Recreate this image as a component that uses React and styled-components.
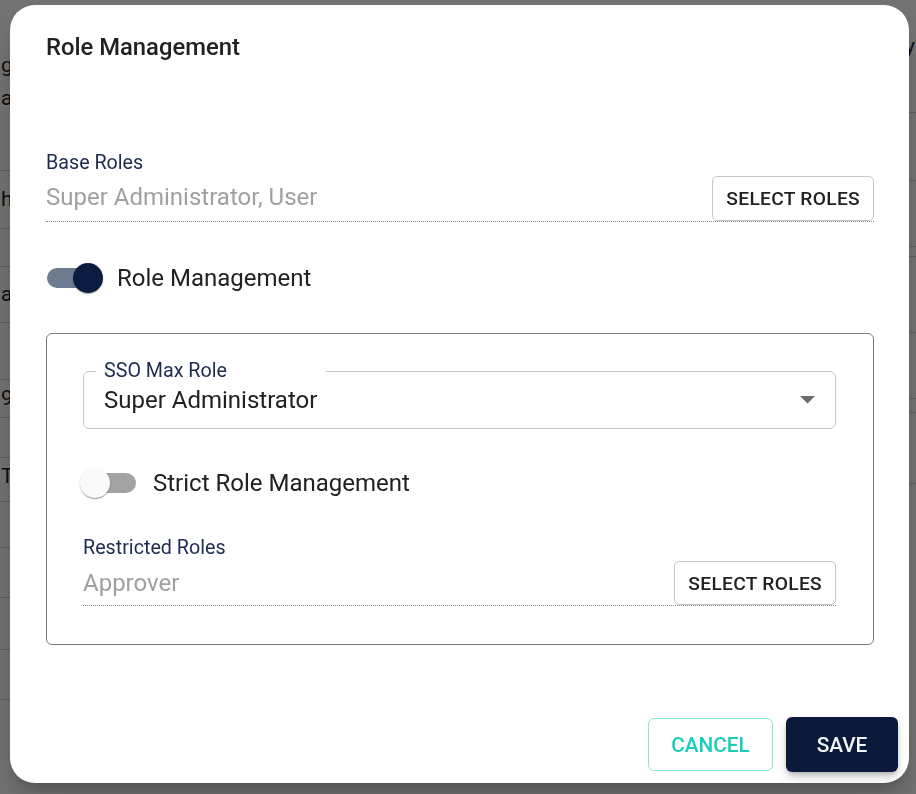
import React from 'react'
import styled, { createGlobalStyle } from 'styled-components'

const GlobalStyle = createGlobalStyle`
  * {
    box-sizing: border-box;
  }
  html, body {
    margin: 0;
    padding: 0;
    height: 100%;
    overflow: hidden;
    background: #ffffff;
    font-family: Roboto, "Noto Sans", "Liberation Sans", Arial, sans-serif;
  }
  #root {
    height: 100%;
  }
`

const NAVY = '#0b1c40'
const LABEL = '#1c2c4f'

// page behind the dialog (only the edges show)
const Page = styled.div`
  height: 100vh;
  display: flex;
  justify-content: space-between;
`

const SideColumn = styled.div`
  width: ${p => p.$w}px;
  display: flex;
  flex-direction: column;
`

const BgRow = styled.div`
  height: ${p => p.$h}px;
  flex-shrink: 0;
  border-bottom: 1px solid #cccccc;
  display: flex;
  flex-direction: column;
  justify-content: center;
  padding-bottom: ${p => p.$pb || 0}px;
  padding-left: ${p => p.$pl || 0}px;
  font-size: 21px;
  line-height: 33px;
  color: #1e1e1e;
  white-space: nowrap;
`

const Overlay = styled.div`
  position: fixed;
  inset: 0;
  background: rgba(0, 0, 0, 0.55);
  display: flex;
  padding: 5px 7px 11px 10px;
`

const Dialog = styled.div`
  flex: 1;
  background: #ffffff;
  border-radius: 25px;
  display: flex;
  flex-direction: column;
  box-shadow: 0 11px 15px -7px rgba(0, 0, 0, 0.2), 0 24px 38px 3px rgba(0, 0, 0, 0.14);
`

const Body = styled.div`
  display: flex;
  flex-direction: column;
  padding: 26px 35px 0 36px;
`

const Title = styled.h2`
  margin: 0;
  font-size: 23.8px;
  font-weight: 500;
  line-height: 32px;
  color: #212121;
`

const Field = styled.div`
  display: flex;
  flex-direction: column;
  margin-top: ${p => p.$mt}px;
`

const FieldLabel = styled.div`
  font-size: 19.7px;
  line-height: 23px;
  color: ${LABEL};
`

const FieldRow = styled.div`
  margin-top: 2px;
  display: flex;
  align-items: center;
  justify-content: space-between;
  border-bottom: 1px dotted #8c8c8c;
`

const FieldValue = styled.div`
  font-size: 24px;
  line-height: 30px;
  color: #a0a0a0;
  padding-bottom: ${p => p.$pb}px;
`

const SelectButton = styled.button`
  height: ${p => p.$h}px;
  padding: 0 13px;
  border: 1px solid #c6c6c6;
  border-radius: 5px;
  background: #ffffff;
  font-family: inherit;
  font-size: 19.2px;
  font-weight: 500;
  letter-spacing: 0.3px;
  color: #212121;
`

const ToggleRow = styled.div`
  margin-top: ${p => p.$mt}px;
  display: flex;
  align-items: center;
  gap: ${p => p.$gap}px;
  margin-left: ${p => p.$ml}px;
`

const SwitchBox = styled.div`
  position: relative;
  width: 56px;
  height: 30px;
  flex-shrink: 0;
`

const Track = styled.div`
  position: absolute;
  top: 5px;
  left: ${p => (p.$on ? 0 : 6)}px;
  width: 50px;
  height: 20px;
  border-radius: 10px;
  background: ${p => (p.$on ? '#6e7b91' : '#a3a3a3')};
`

const Thumb = styled.div`
  position: absolute;
  top: 0;
  left: ${p => (p.$on ? 26 : 0)}px;
  width: 30px;
  height: 30px;
  border-radius: 50%;
  background: ${p => (p.$on ? NAVY : '#fafafa')};
  box-shadow: 0 2px 1px -1px rgba(0, 0, 0, 0.2), 0 1px 1px 0 rgba(0, 0, 0, 0.14), 0 1px 3px 0 rgba(0, 0, 0, 0.12);
`

const ToggleLabel = styled.span`
  font-size: 24px;
  line-height: 30px;
  color: #212121;
`

const GroupBox = styled.div`
  margin-top: 40px;
  border: 1px solid #7a7a7a;
  border-radius: 6px;
  padding: 37px 37px 38px 36px;
  display: flex;
  flex-direction: column;
`

const SelectBox = styled.div`
  position: relative;
  height: 58px;
  border: 1px solid #c6c6c6;
  border-radius: 6px;
  display: flex;
  align-items: center;
  justify-content: space-between;
  padding: 0 20px;
`

const NotchLabel = styled.span`
  position: absolute;
  top: -12px;
  left: 12px;
  width: 230px;
  padding: 0 8px;
  background: #ffffff;
  font-size: 19.7px;
  line-height: 22px;
  color: ${LABEL};
`

const SelectValue = styled.span`
  font-size: 24px;
  color: #212121;
`

const Footer = styled.div`
  margin-top: auto;
  display: flex;
  justify-content: flex-end;
  align-items: center;
  gap: 13px;
  padding: 0 11px 11px 0;
`

const CancelButton = styled.button`
  width: 125px;
  height: 53px;
  border: 1px solid #86e6db;
  border-radius: 6px;
  background: #ffffff;
  font-family: inherit;
  font-size: 20.8px;
  font-weight: 500;
  color: #19ccbc;
`

const SaveButton = styled.button`
  width: 112px;
  height: 55px;
  border: none;
  border-radius: 6px;
  background: #0b1a3a;
  font-family: inherit;
  font-size: 20.8px;
  font-weight: 500;
  color: #f4f4f4;
  box-shadow: 0 3px 5px -1px rgba(0, 0, 0, 0.2), 0 6px 10px 0 rgba(0, 0, 0, 0.14);
`

const leftRows = [
  { h: 171, text: ['g', 'ar'], pb: 6 },
  { h: 58, text: ['h'] },
  { h: 38 },
  { h: 56, text: ['a'] },
  { h: 57 },
  { h: 38, text: ['9'] },
  { h: 40 },
  { h: 44, text: ['T'], pb: 6 },
  { h: 46 },
  { h: 50 },
  { h: 52 },
  { h: 50 },
]

const rightRows = [
  { h: 113, text: ['y'], pb: 20 },
  { h: 68 },
  { h: 66 },
  { h: 10 },
  { h: 76 },
  { h: 66 },
  { h: 14 },
  { h: 71 },
]

function Switch({ on }) {
  return (
    <SwitchBox>
      <Track $on={on} />
      <Thumb $on={on} />
    </SwitchBox>
  )
}

function Arrow() {
  return (
    <svg width="15" height="8" viewBox="0 0 15 8">
      <path d="M0 0 L15 0 L7.5 7.5 Z" fill="#6b6b6b" />
    </svg>
  )
}

export default function App() {
  return (
    <>
      <GlobalStyle />
      <Page>
        <SideColumn $w={30}>
          {leftRows.map((r, i) => (
            <BgRow key={i} $h={r.h} $pb={r.pb} $pl={1}>
              {r.text && r.text.map(t => <span key={t}>{t}</span>)}
            </BgRow>
          ))}
        </SideColumn>
        <SideColumn $w={20}>
          {rightRows.map((r, i) => (
            <BgRow key={i} $h={r.h} $pb={r.pb} $pl={9}>
              {r.text && r.text.map(t => <span key={t}>{t}</span>)}
            </BgRow>
          ))}
        </SideColumn>
      </Page>

      <Overlay>
        <Dialog>
          <Body>
            <Title>Role Management</Title>

            <Field $mt={88}>
              <FieldLabel>Base Roles</FieldLabel>
              <FieldRow>
                <FieldValue $pb={3}>Super Administrator, User</FieldValue>
                <SelectButton $h={45}>SELECT ROLES</SelectButton>
              </FieldRow>
            </Field>

            <ToggleRow $mt={41} $gap={14} $ml={1}>
              <Switch on />
              <ToggleLabel>Role Management</ToggleLabel>
            </ToggleRow>

            <GroupBox>
              <SelectBox>
                <NotchLabel>SSO Max Role</NotchLabel>
                <SelectValue>Super Administrator</SelectValue>
                <Arrow />
              </SelectBox>

              <ToggleRow $mt={39} $gap={17} $ml={-3}>
                <Switch on={false} />
                <ToggleLabel>Strict Role Management</ToggleLabel>
              </ToggleRow>

              <Field $mt={38}>
                <FieldLabel>Restricted Roles</FieldLabel>
                <FieldRow>
                  <FieldValue $pb={0}>Approver</FieldValue>
                  <SelectButton $h={44}>SELECT ROLES</SelectButton>
                </FieldRow>
              </Field>
            </GroupBox>
          </Body>

          <Footer>
            <CancelButton>CANCEL</CancelButton>
            <SaveButton>SAVE</SaveButton>
          </Footer>
        </Dialog>
      </Overlay>
    </>
  )
}
